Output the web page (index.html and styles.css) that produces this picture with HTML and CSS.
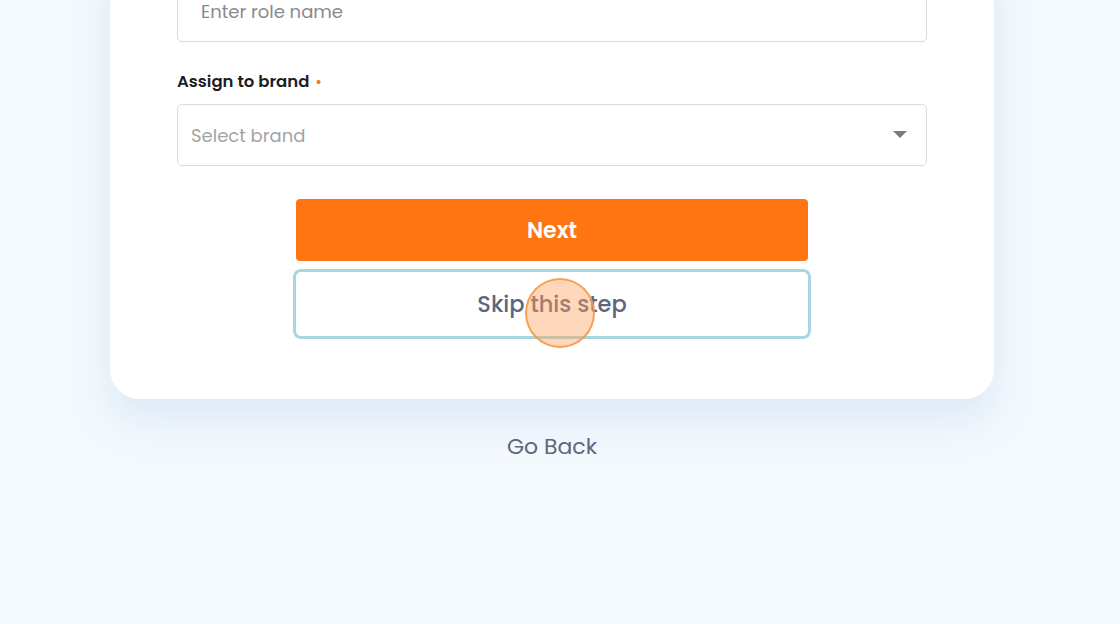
FILE: index.html
```html
<!DOCTYPE html>
<html lang="en">
<head>
    <meta charset="UTF-8">
    <meta name="viewport" content="width=device-width, initial-scale=1.0">
    <title>Create role</title>
    <link rel="stylesheet" href="styles.css">
</head>
<body>

    <div class="page">
        <form class="card" id="formRole">
            <input type="text" class="field" id="roleName" placeholder="Enter role name">

            <label class="label" for="brand">Assign to brand <span class="required">•</span></label>
            <div class="select-wrap">
                <select class="field select" id="brand">
                    <option value="">Select brand</option>
                </select>
                <svg class="caret" width="14" height="8" viewBox="0 0 14 8"><path d="M0 0h14L7 7z" fill="#7a7a7a"/></svg>
            </div>

            <div class="actions">
                <button type="button" class="btn btn-primary">Next</button>
                <button type="button" class="btn btn-skip">
                    Skip this step
                    <span class="click-dot"></span>
                </button>
            </div>
        </form>

        <a class="back" href="#">Go Back</a>
    </div>

</body>
</html>
```

FILE: styles.css
```css
/* Base */
html, body {
    margin: 0;
    height: 100%;
}

body {
    background-color: #f4f9fd;
    font-family: "Poppins", "Open Sans", sans-serif;
    overflow: hidden;
}

.page {
    width: 1104px;
    display: flex;
    flex-direction: column;
    align-items: center;
}

/* Card */
.card {
    width: 884px;
    box-sizing: border-box;
    margin-top: -60px;
    padding: 40px 67px 63px;
    background: #fff;
    border-radius: 0 0 30px 30px;
    box-shadow: 0 22px 40px rgba(120, 160, 210, 0.18);
    display: flex;
    flex-direction: column;
}

.field {
    width: 100%;
    height: 62px;
    box-sizing: border-box;
    padding: 0 23px;
    border: 1px solid #d9d9d9;
    border-radius: 5px;
    background: #fff;
    font-family: inherit;
    font-size: 18px;
    color: #333;
}

.field::placeholder {
    color: #8a8a8a;
}

.label {
    margin: 29px 0 11px;
    font-size: 16.5px;
    font-weight: 600;
    line-height: 22px;
    color: #1d1d1f;
}

    .label .required {
        color: #f47b20;
        font-size: 14px;
        margin-left: 2px;
    }

.select-wrap {
    position: relative;
}

.select {
    appearance: none;
    padding-left: 13px;
    color: #a3a3a3;
}

.caret {
    position: absolute;
    right: 20px;
    top: 27px;
}

/* Buttons */
.actions {
    margin-top: 33px;
    display: flex;
    flex-direction: column;
    align-items: center;
    gap: 11px;
}

.btn {
    width: 512px;
    height: 62px;
    border-radius: 4px;
    font-family: inherit;
    font-size: 22px;
    font-weight: 600;
    cursor: pointer;
}

.btn-primary {
    background-color: #ff7512;
    color: #fff;
    border: none;
}

.btn-skip {
    position: relative;
    height: 64px;
    background: #fff;
    color: #5c6680;
    font-size: 22.5px;
    font-weight: 500;
    border: none;
    outline: 3px solid #a7d6e0;
    border-radius: 5px;
}

.click-dot {
    position: absolute;
    left: 229px;
    top: 6px;
    width: 70px;
    height: 70px;
    box-sizing: border-box;
    border-radius: 50%;
    border: 2px solid rgba(245, 150, 70, 0.85);
    background: rgba(255, 160, 90, 0.42);
}

.back {
    margin-top: 31px;
    font-size: 22px;
    color: #5d6879;
    text-decoration: none;
}
```
